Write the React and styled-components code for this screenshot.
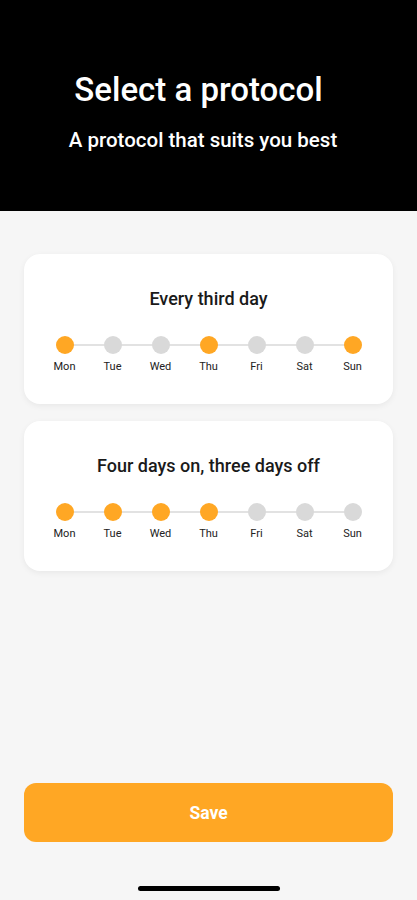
import React from "react";
import styled, { createGlobalStyle } from "styled-components";

const GlobalStyle = createGlobalStyle`
	body {
		margin: 0;
		background: #f6f6f6;
		font-family: Roboto, "Liberation Sans", sans-serif;
	}
`;

const Screen = styled.div`
	display: flex;
	flex-direction: column;
	min-height: 900px;
	background: #f6f6f6;
`;

const Header = styled.header`
	height: 211px;
	box-sizing: border-box;
	padding-top: 70px;
	background: #000;
	color: #fff;
	text-align: center;

	h1 {
		margin: 0;
		padding-right: 20px;
		font-size: 33px;
		line-height: 40px;
		font-weight: 500;
	}

	p {
		margin: 17px 0 0;
		padding-right: 11px;
		font-size: 20.5px;
		line-height: 26px;
		font-weight: 500;
	}
`;

const List = styled.div`
	display: flex;
	flex-direction: column;
	gap: 17px;
	padding: 43px 24px 0;
`;

const Card = styled.div`
	background: #fff;
	border-radius: 16px;
	box-shadow: 0 2px 6px rgba(0, 0, 0, 0.06);
	padding: 34px 0 32px;
	height: 150px;
	box-sizing: border-box;
`;

const CardTitle = styled.div`
	text-align: center;
	font-size: 18px;
	line-height: 22px;
	font-weight: 500;
	color: #1a1a1a;
`;

const Days = styled.div`
	position: relative;
	display: grid;
	grid-template-columns: repeat(7, 48px);
	justify-content: center;
	margin-top: 26px;

	&::before {
		content: "";
		position: absolute;
		top: 8px;
		left: calc(50% - 144px);
		width: 288px;
		height: 2px;
		background: #e2e2e2;
	}
`;

const Day = styled.div`
	position: relative;
	display: flex;
	flex-direction: column;
	align-items: center;
	gap: 6px;
`;

const Dot = styled.span`
	width: 18px;
	height: 18px;
	border-radius: 50%;
	background: ${props => (props.on ? "#ffa724" : "#d9d9d9")};
`;

const Label = styled.span`
	font-size: 11px;
	line-height: 14px;
	color: #222;
`;

const Spacer = styled.div`
	flex: 1;
`;

const SaveButton = styled.button`
	margin: 0 24px;
	height: 59px;
	border: none;
	border-radius: 12px;
	background: #ffa724;
	color: #fff;
	font-family: Roboto, "Liberation Sans", sans-serif;
	font-size: 17.5px;
	font-weight: 700;
`;

const HomeBar = styled.div`
	align-self: center;
	width: 142px;
	height: 5px;
	border-radius: 3px;
	background: #000;
	margin: 44px 0 9px;
`;

const days = ["Mon", "Tue", "Wed", "Thu", "Fri", "Sat", "Sun"];

const protocols = [
	{ title: "Every third day", on: [0, 3, 6] },
	{ title: "Four days on, three days off", on: [0, 1, 2, 3] },
];

const ProtocolCard = ({ protocol }) => (
	<Card>
		<CardTitle>{protocol.title}</CardTitle>
		<Days>
			{days.map((d, i) => (
				<Day key={d}>
					<Dot on={protocol.on.includes(i)} />
					<Label>{d}</Label>
				</Day>
			))}
		</Days>
	</Card>
);

const App = () => (
	<Screen>
		<GlobalStyle />
		<Header>
			<h1>Select a protocol</h1>
			<p>A protocol that suits you best</p>
		</Header>
		<List>
			{protocols.map(p => (
				<ProtocolCard key={p.title} protocol={p} />
			))}
		</List>
		<Spacer />
		<SaveButton>Save</SaveButton>
		<HomeBar />
	</Screen>
);

export default App;
